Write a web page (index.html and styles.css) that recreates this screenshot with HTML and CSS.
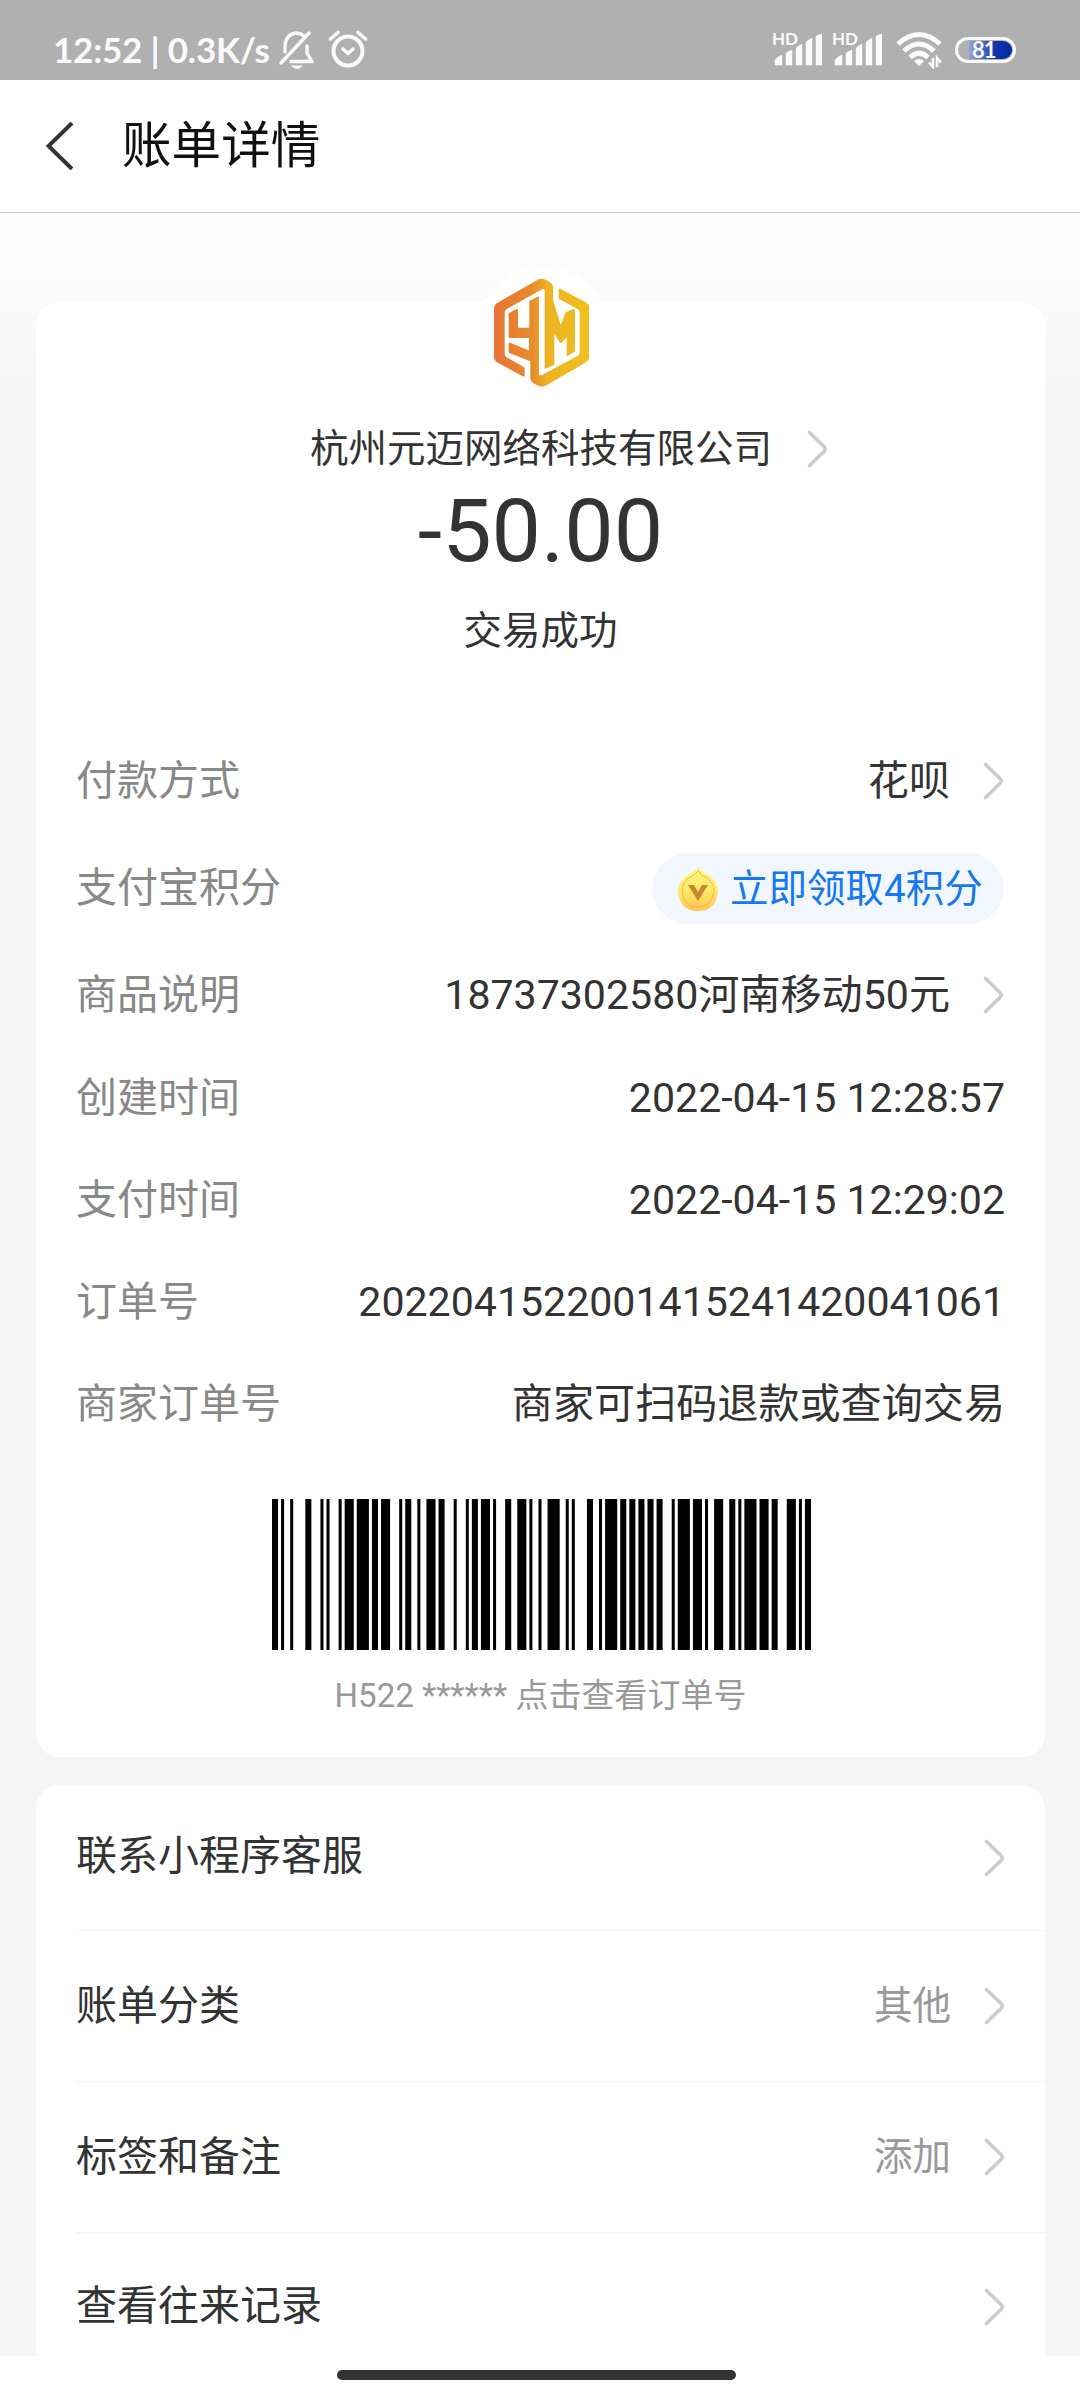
FILE: index.html
```html
<!DOCTYPE html>
<html lang="zh-CN">
<head>
<meta charset="utf-8">
<title>账单详情</title>
<link rel="stylesheet" href="styles.css">
</head>
<body>
<svg class="defs" width="0" height="0">
  <symbol id="chev" viewBox="0 0 22 38"><path d="M2.5 2.5 17 16.5Q19.5 19 17 21.500L2.500 35.500" fill="none" stroke="#ccc" stroke-width="3.600" stroke-linecap="round"/></symbol>
  <symbol id="signal" viewBox="0 0 48 32"><path d="M1 31v-4q0-2 3-4l4-2v10zM12 31V20q0-2 6-4v15zM22 31V15q0-2 6-5v21zM32 31V9q0-2 6-5v27zM42 31V3q0-2 6-3v31z" fill="#fafafa" stroke="#fafafa" stroke-width=".5" stroke-linejoin="round"/></symbol>
</svg>
<div class="phone">
  <div class="status">
    <span class="clock">12:52 | 0.3K/s</span>
    <svg class="bell" width="36" height="39" viewBox="0 0 36 39" fill="none" stroke="#fafafa" stroke-width="3.400" stroke-linecap="round" stroke-linejoin="round"><path d="M2 32 30 2M6 21V15Q7 3 17 2Q22 2 25 5M28 15V22L33 30.500H12"/><path d="M13 35H23Q18 40 13 35Z" fill="#fafafa" stroke-width="1"/></svg>
    <svg class="alarm" width="40" height="39" viewBox="0 0 40 39" fill="none" stroke="#fafafa" stroke-width="4" stroke-linecap="round" stroke-linejoin="round"><circle cx="20" cy="21" r="14.500"/><path d="M2.500 9 10 2.500M30 2.500 37.500 9M15 19l5 4.500 5-4.500" stroke-width="3.600"/></svg>
    <div class="radio">
      <div class="sim"><span class="hd">HD</span><svg width="48" height="32"><use href="#signal"/></svg></div>
      <div class="sim"><span class="hd">HD</span><svg width="48" height="32"><use href="#signal"/></svg></div>
      <svg class="wifi" width="48" height="38" viewBox="0 0 48 38" fill="none" stroke="#fafafa" stroke-width="5"><path d="M2 13Q23-6 44 13M8 20Q23 6 38 20M14 26.500Q23 18 32 26.500"/><path d="M18 30Q23 26 28 30L23 35Z" fill="#fafafa" stroke="none"/><path d="M37 27v9l-4-4.500M41 36v-9l4 4.500" stroke-width="2.600"/></svg>
      <div class="battery"><span>81</span></div>
    </div>
  </div>
  <header class="bar">
    <svg width="28" height="48" viewBox="0 0 28 48"><path d="M26 1 2.500 24 26 47" fill="none" stroke="#333" stroke-width="4"/></svg>
    <h1>账单详情</h1>
  </header>
  <main class="page">
    <section class="card bill">
      <svg class="logo" width="160" height="150" viewBox="0 0 480 450">
        <defs><linearGradient id="gold" gradientUnits="userSpaceOnUse" x1="105" y1="230" x2="385" y2="230"><stop offset="0" stop-color="#e77434"/><stop offset=".4" stop-color="#e88b2d"/><stop offset=".56" stop-color="#ecb321"/><stop offset="1" stop-color="#f0c020"/></linearGradient></defs>
        <circle cx="248" cy="248" r="198" fill="#fff"/>
        <g fill="url(#gold)" stroke="url(#gold)" stroke-width="6" stroke-linejoin="round">
          <path d="M191 377 112 334Q105 330 105 322V174Q105 166 112 162L232 93Q245 85 258 93L268 99Q276 104 276 112V150L302 234 320 188 342 180V303L323 315V255L302 276 280 240V342L257 353V122Q257 112 245 115L143 172Q131 178 131 188V312Q131 320 138 324L191 354Z"/>
          <path d="M299 119 377 160Q384 164 384 172V322Q384 330 377 334L258 403Q245 410 233 403L222 397Q214 392 214 384V332L149 306V281L210 306V261H149V192L171 180V236H211V154L234 143V371Q236 384 250 376L354 321Q362 316 362 308V188Q362 178 354 174L299 144Z"/>
        </g>
      </svg>
      <div class="payee"><span>杭州元迈网络科技有限公司</span><svg class="chev" width="22" height="38"><use href="#chev"/></svg></div>
      <div class="amount">-50.00</div>
      <div class="result">交易成功</div>
      <dl class="info">
        <div class="row tall"><dt>付款方式</dt><dd>花呗<svg class="chev" width="22" height="38"><use href="#chev"/></svg></dd></div>
        <div class="row tall"><dt>支付宝积分</dt><dd class="pill">
          <svg width="42" height="46" viewBox="0 0 42 46"><defs><linearGradient id="coin" x1="0" y1="0" x2="0" y2="1"><stop offset="0" stop-color="#fff37a"/><stop offset=".5" stop-color="#ffec6b"/><stop offset="1" stop-color="#fec452"/></linearGradient></defs><path d="M21 1Q24 5 31 9Q41 15 41 26Q39 45 21 45Q3 45 1 26Q1 15 11 9Q18 5 21 1Z" fill="url(#coin)"/><path d="M21 5Q24 9 30 12Q37 17 37 26Q35 41 21 41Q7 41 5 26Q5 17 12 12Q18 9 21 5Z" fill="none" stroke="#efb74a"/><path d="M11 19H17L21 26 25 19H31L21 35Z" fill="#c8892e"/></svg>
          <span>立即领取4积分</span></dd></div>
        <div class="row tall goods"><dt>商品说明</dt><dd>18737302580河南移动50元<svg class="chev" width="22" height="38"><use href="#chev"/></svg></dd></div>
        <div class="row"><dt>创建时间</dt><dd>2022-04-15 12:28:57</dd></div>
        <div class="row"><dt>支付时间</dt><dd>2022-04-15 12:29:02</dd></div>
        <div class="row"><dt>订单号</dt><dd>2022041522001415241420041061</dd></div>
        <div class="row"><dt>商家订单号</dt><dd>商家可扫码退款或查询交易</dd></div>
      </dl>
      <svg class="barcode" width="539" height="151" viewBox="0 0 178 1" preserveAspectRatio="none"><path d="M0 0h2v1h-2zM3 0h1v1h-1zM6 0h1v1h-1zM11 0h2v1h-2zM16 0h1v1h-1zM18 0h1v1h-1zM22 0h1v1h-1zM24 0h3v1h-3zM28 0h4v1h-4zM33 0h2v1h-2zM36 0h3v1h-3zM42 0h1v1h-1zM44 0h2v1h-2zM48 0h1v1h-1zM51 0h3v1h-3zM55 0h2v1h-2zM60 0h1v1h-1zM64 0h1v1h-1zM66 0h2v1h-2zM69 0h3v1h-3zM73 0h1v1h-1zM77 0h2v1h-2zM81 0h3v1h-3zM85 0h1v1h-1zM88 0h1v1h-1zM91 0h4v1h-4zM97 0h1v1h-1zM99 0h1v1h-1zM104 0h2v1h-2zM108 0h1v1h-1zM110 0h4v1h-4zM115 0h2v1h-2zM118 0h2v1h-2zM121 0h2v1h-2zM124 0h2v1h-2zM127 0h2v1h-2zM132 0h1v1h-1zM134 0h4v1h-4zM139 0h3v1h-3zM143 0h1v1h-1zM146 0h3v1h-3zM151 0h2v1h-2zM154 0h1v1h-1zM156 0h4v1h-4zM161 0h3v1h-3zM165 0h2v1h-2zM170 0h3v1h-3zM174 0h1v1h-1zM176 0h2v1h-2z"/></svg>
      <div class="caption">H522 ****** 点击查看订单号</div>
    </section>
    <section class="card menu">
      <div class="item first"><span>联系小程序客服</span><svg class="chev" width="22" height="38"><use href="#chev"/></svg></div>
      <div class="item"><span>账单分类</span><em>其他</em><svg class="chev" width="22" height="38"><use href="#chev"/></svg></div>
      <div class="item"><span>标签和备注</span><em>添加</em><svg class="chev" width="22" height="38"><use href="#chev"/></svg></div>
      <div class="item last"><span>查看往来记录</span><svg class="chev" width="22" height="38"><use href="#chev"/></svg></div>
    </section>
  </main>
  <footer class="home"><i></i></footer>
</div>
</body>
</html>
```
FILE: styles.css
```css
* { box-sizing: border-box; margin: 0; padding: 0; }
body { background: #fff; color: #333; font-family: Roboto, "Noto Sans CJK SC", sans-serif; }
svg { display: block; flex: none; }
.defs { position: absolute; }
.phone { width: 1080px; height: 2400px; display: flex; flex-direction: column; overflow: hidden; }

.status { height: 80px; background: #b0b0b0; color: #fafafa; display: flex; align-items: flex-start; padding: 0 64px 0 53px; font-family: Lato, sans-serif; white-space: nowrap; }
.clock { width: 226px; margin-top: 28px; font-size: 35px; line-height: 42px; font-weight: 700; letter-spacing: -.2px; }
.bell { margin-top: 31px; }
.alarm { margin: 30px 0 0 13px; }
.radio { margin-left: auto; display: flex; align-items: flex-start; }
.sim { width: 60px; height: 32px; margin-top: 34px; display: flex; }
.sim svg { margin-left: -20px; }
.hd { width: 22px; margin-top: -3px; font-size: 17px; line-height: 16px; font-weight: 700; }
.wifi { margin: 31px 0 0 4px; }
.battery { width: 61px; height: 26px; margin: 37px 0 0 11px; border: 3px solid #fafafa; border-radius: 13px; padding: 1px; display: flex; }
.battery span { width: 43px; height: 18px; margin-left: 10px; padding-left: 3px; border-radius: 0 9px 9px 0; background: linear-gradient(90deg, #90a6da, #1237ab 60%, #0029a3); font-size: 22px; line-height: 17px; font-weight: 700; letter-spacing: -1px; }

.bar { height: 133px; background: #fff; border-bottom: 1px solid #ccc; display: flex; align-items: center; padding: 0 0 1px 46px; }
.bar h1 { margin-left: 48px; font-size: 49.6px; line-height: 60px; font-weight: 400; color: #111; }

.page { height: 2143px; padding: 89px 35px 0 36px; background: linear-gradient(#fff, #f5f5f5 180px); overflow: hidden; display: flex; flex-direction: column; gap: 28px; }
.card { flex: none; background: #fff; border-radius: 24px; }
.bill { height: 1455px; display: flex; flex-direction: column; align-items: center; }
.logo { margin: -52px 0 0 -1px; }
.payee { height: 60px; margin: 19px 0 0 58px; display: flex; align-items: center; gap: 35px; font-size: 38.5px; line-height: 60px; }
.amount { height: 100px; margin-top: 2px; font-size: 88px; line-height: 100px; }
.result { height: 60px; margin-top: 20px; font-size: 38.5px; line-height: 60px; }
.info { width: 100%; margin-top: 66px; padding: 0 40px; font-size: 41px; }
.row { height: 102px; display: flex; align-items: center; justify-content: space-between; white-space: nowrap; }
.row.tall { height: 107.500px; }
.row.goods { height: 105px; padding-bottom: 0; }
.row dt { color: #888; line-height: 60px; }
.row dd { display: flex; align-items: center; line-height: 60px; font-size: 41.100px; }
.row dd .chev { margin-left: 33px; }
.row dd.pill { width: 352px; height: 71px; padding-left: 25px; margin: 1px 1px 0 0; gap: 11px; border-radius: 36px; background: #f2f7ff; color: #1677f5; font-size: 38.500px; }
.barcode { margin: 44px 0 0 2px; }
.caption { margin-top: 22px; font-size: 33px; line-height: 48px; color: #999; }

.menu { height: 620px; padding-left: 40px; }
.item { height: 151px; padding-right: 39px; border-bottom: 1px solid #f5f5f5; display: flex; align-items: center; font-size: 41px; line-height: 60px; }
.item span { margin-top: -1px; }
.item.first { height: 146px; }
.item.first span { margin-top: -4px; }
.item.last { border: 0; height: 147px; }
.item em { margin-left: auto; font-style: normal; font-size: 38.500px; color: #999; }
.item .chev { margin-left: auto; }
.item em + .chev { margin-left: 33px; }

.home { height: 44px; background: #fff; display: flex; justify-content: center; padding: 14px 8px 0 0; }
.home i { width: 399px; height: 10px; border-radius: 5px; background: #333; }
```
